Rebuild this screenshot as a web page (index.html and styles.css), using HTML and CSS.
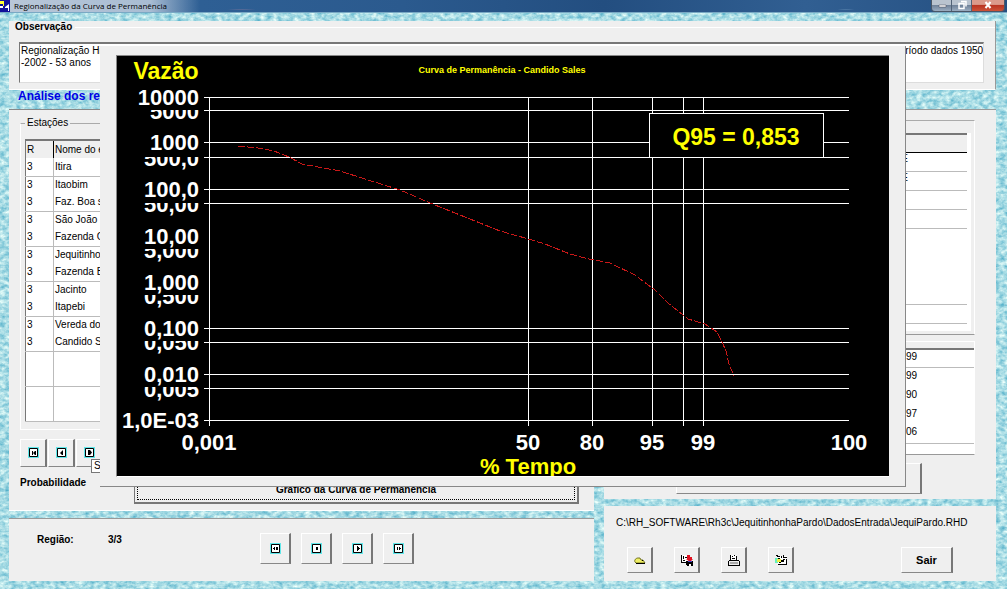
FILE: index.html
```html
<!DOCTYPE html>
<html lang="pt-BR">
<head>
<meta charset="utf-8">
<title>Regionalização da Curva de Permanência</title>
<link rel="stylesheet" href="styles.css">
</head>
<body>
<svg class="water" aria-hidden="true">
  <filter id="ripple" x="0" y="0" width="100%" height="100%" color-interpolation-filters="sRGB">
    <feTurbulence type="fractalNoise" baseFrequency="0.18 0.26" numOctaves="3" seed="8"/>
    <feColorMatrix values="0.75 0 0 0 0.28  0.4 0 0 0 0.66  0.25 0 0 0 0.77  0 0 0 0 1"/>
  </filter>
  <rect width="100%" height="100%" filter="url(#ripple)"/>
</svg>
<div class="window">
  <header class="titlebar">
    <svg class="app-icon" viewBox="0 0 10 12"><path fill="#10109a" d="M0 0h10v12H0z"/><path fill="#ff3" d="M0 1h4v5H3V4H0z"/><path fill="#fff" d="M5 7l4-3v7H8V8H5zM0 6h3v2H0z"/></svg>
    <h1 class="title">Regionalização da Curva de Permanência</h1>
    <div class="caption-buttons">
      <button class="cap" aria-label="Minimizar"><svg viewBox="0 0 20 11"><path fill="#fff" stroke="#445" stroke-width=".5" d="M7 5h7v2H7z"/></svg></button>
      <button class="cap" aria-label="Restaurar"><svg viewBox="0 0 20 11"><path fill="none" stroke="#fff" stroke-width="1.5" d="M9 1.500h5v5M7 3.500h5v5H7z"/></svg></button>
      <button class="cap close" aria-label="Fechar"><svg viewBox="0 0 20 11"><path fill="none" stroke="#fff" stroke-width="2" d="M7.500 2l5 6M12.500 2l-5 6"/></svg></button>
    </div>
  </header>

  <main class="content">
    <section class="panel observation">
      <label class="obs-label" for="obs">Observação</label>
      <textarea id="obs" class="obs-text" wrap="off">Regionalização Hid&#9;Período dados 1950
-2002 - 53 anos</textarea>
    </section>
    <h2 class="heading">Análise dos re</h2>

    <div class="columns">
      <div class="column">
        <section class="panel stations">
          <fieldset class="group">
            <legend>Estações</legend>
            <table class="station-table">
              <thead><tr><th>R</th><th>Nome do e</th></tr></thead>
              <tbody>
                <tr><td>3</td><td>Itira</td></tr>
                <tr><td>3</td><td>Itaobim</td></tr>
                <tr><td>3</td><td>Faz. Boa s</td></tr>
                <tr><td>3</td><td>São João (</td></tr>
                <tr><td>3</td><td>Fazenda C</td></tr>
                <tr><td>3</td><td>Jequitinhor</td></tr>
                <tr><td>3</td><td>Fazenda B</td></tr>
                <tr><td>3</td><td>Jacinto</td></tr>
                <tr><td>3</td><td>Itapebi</td></tr>
                <tr><td>3</td><td>Vereda do</td></tr>
                <tr><td>3</td><td>Candido S</td></tr>
                <tr><td></td><td></td></tr>
                <tr><td></td><td></td></tr>
                <tr><td></td><td></td></tr>
                <tr><td></td><td></td></tr>
              </tbody>
            </table>
          </fieldset>
          <div class="station-nav">
            <button class="btn nav-small" aria-label="Primeira estação"><svg class="nav-icon" viewBox="0 0 11 11"><path class="halo" d="M0 0h11v11H0z"/><path class="frame" d="M1.500 1.500h8v8h-8z"/><path d="M4 4h1v4H4zM5 6l2-2v4zM7 4h1v4H7z"/></svg></button>
            <button class="btn nav-small" aria-label="Estação anterior"><svg class="nav-icon" viewBox="0 0 11 11"><path class="halo" d="M0 0h11v11H0z"/><path class="frame" d="M1.500 1.500h8v8h-8z"/><path d="M4 6l3-3v5H6z"/></svg></button>
            <button class="btn nav-small" aria-label="Próxima estação"><svg class="nav-icon" viewBox="0 0 11 11"><path class="halo" d="M0 0h11v11H0z"/><path class="frame" d="M1.500 1.500h8v8h-8z"/><path d="M4 3h2l2 2.500L6 8H4z"/></svg><span class="tip">S</span></button>
          </div>
          <div class="probability">
            <span class="strong">Probabilidade</span>
            <button class="btn curve-button"><span class="focus">Gráfico da Curva de Permanência</span></button>
          </div>
        </section>
        <section class="panel region">
          <span class="strong region-name">Região:</span>
          <output class="strong region-count">3/3</output>
          <div class="region-nav">
            <button class="btn nav-large" aria-label="Primeira região"><svg class="nav-icon" viewBox="0 0 11 11"><path class="halo" d="M0 0h11v11H0z"/><path class="frame" d="M1.500 1.500h8v8h-8z"/><path d="M3 5h1V4h1v3H4V6H3zM6 4h2v3H6z"/></svg></button>
            <button class="btn nav-large" aria-label="Região anterior"><svg class="nav-icon" viewBox="0 0 11 11"><path class="halo" d="M0 0h11v11H0z"/><path class="frame" d="M1.500 1.500h8v8h-8z"/><path d="M5 4h2v3H5z"/></svg></button>
            <button class="btn nav-large" aria-label="Próxima região"><svg class="nav-icon" viewBox="0 0 11 11"><path class="halo" d="M0 0h11v11H0z"/><path class="frame" d="M1.500 1.500h8v8h-8z"/><path d="M5 3h1v1h1v1h1v1H7v1H6v1H5z"/></svg></button>
            <button class="btn nav-large" aria-label="Última região"><svg class="nav-icon" viewBox="0 0 11 11"><path class="halo" d="M0 0h11v11H0z"/><path class="frame" d="M1.500 1.500h8v8h-8z"/><path d="M4 4h1v3H4zM6 4h1v1h1v1H7v1H6z"/></svg></button>
          </div>
        </section>
      </div>

      <div class="column">
        <section class="panel results">
          <div class="box types">
            <table class="type-table">
              <thead><tr><th></th></tr></thead>
              <tbody>
                <tr class="line"><td>E</td></tr>
                <tr class="line"><td>E</td></tr>
                <tr class="line"><td></td></tr>
                <tr class="line"><td></td></tr>
                <tr><td></td></tr>
                <tr><td></td></tr>
                <tr><td></td></tr>
                <tr class="line"><td></td></tr>
                <tr class="line"><td></td></tr>
              </tbody>
            </table>
          </div>
          <div class="box values">
            <table class="value-table">
              <tbody>
                <tr class="line"><td>99</td></tr>
                <tr><td>99</td></tr>
                <tr><td>90</td></tr>
                <tr><td>97</td></tr>
                <tr class="line"><td>06</td></tr>
              </tbody>
            </table>
          </div>
          <button class="btn wide-button" aria-label="Resultados"></button>
        </section>
        <section class="panel file">
          <p class="path">C:\RH_SOFTWARE\Rh3c\JequitinhonhaPardo\DadosEntrada\JequiPardo.RHD</p>
          <div class="tools">
            <button class="btn tool" aria-label="Abrir"><svg viewBox="0 0 14 14"><path fill="#ee6" stroke="#550" stroke-width=".8" d="M2 9c-1-2 1-4 3-4h2l1 2h2l2 3H3z"/><path d="M3 10h9v1H3zM9 7h1v1H9z"/></svg></button>
            <button class="btn tool" aria-label="Salvar"><svg viewBox="0 0 14 14"><path fill="#fff" d="M1 2h8v8H1z"/><path d="M1 2h1v8H1zM1 9h6v1H1zM3 3h1v3H3zM5 4h2v1H5zM3 7h2v1H3z"/><path fill="#e01020" d="M7 2h3v2h2v2h1L10 9 6 6h1z"/><path d="M6 8h2v1h4V8h1v5H7v-1H6z"/><path fill="#44c" d="M8 8h4v1H8z"/><path fill="#fff" d="M9 11h2v2H9z"/></svg></button>
            <button class="btn tool" aria-label="Imprimir"><svg viewBox="0 0 14 14"><path fill="#fff" d="M3 2h6l2 5H3z"/><path d="M3 2h1v5H3zM5 3h1v1H5zM7 2h1v1H7zM9 3h1v4H9zM5 5h3v1H5zM2 7h10v1H2zM1 8h1v4h10V8h1v5H1z"/><path fill="#aaa" d="M3 9h8v2H3z"/></svg></button>
            <button class="btn tool" aria-label="Configurar"><svg viewBox="0 0 14 14"><path fill="#fff" d="M3 3h10v8H3z"/><path fill="#6eb" d="M1 5h3v5H1z"/><path fill="#ee4" d="M3 6h4v3H3z"/><path d="M2 2h2v1h2v1H3V3H2zM7 3h1v2H7zM9 2h1v2h3v1H9zM12 6h1v6H4v-1h8zM7 7h2V6h2v1h-1v2H7zM4 5h2v1H4zM5 9h2v1H5z"/></svg></button>
            <button class="btn exit">Sair</button>
          </div>
        </section>
      </div>
    </div>
  </main>

  <div class="dialog" role="dialog" aria-label="Curva de Permanência">
    <svg class="chart" viewBox="117 56 772 420" role="img" aria-label="Curva de Permanência - Candido Sales">
      <g class="grid">
        <path d="M204 97.500H849M204 110.500H849M204 142.500H849M204 157.500H849M204 189.500H849M204 203.500H849M204 328.500H849M204 342.500H849M204 374.500H849M204 388.500H849M204 420.500H849"/>
        <path d="M209.500 97V426M528.500 97V426M592.500 97V426M652.500 97V426M683.500 97V426M703.500 97V426"/>
      </g>
      <path class="curve" d="M238 146l20 2 16 3 15 6 13 7 38 7 25 8 35 11 35 15 35 14 30 12 25 7 20 6 25 10 19 5 21 4 25 12 20 15 13 13 20 16 17 5 12 8 5 10 4 9 3 13 5 12"/>
      <g class="label end">
        <text x="199" y="119">5000</text><text x="199" y="166">500,0</text><text x="199" y="212">50,00</text><text x="199" y="258">5,000</text><text x="199" y="304">0,500</text><text x="199" y="350">0,050</text><text x="199" y="397">0,005</text>
      </g>
      <path d="M118 86h82v24h-82zM118 132h82v25h-82zM118 179h82v24h-82zM118 225h82v24h-82zM118 271h82v24h-82zM118 317h82v24h-82zM118 363h82v24h-82z"/>
      <g class="label end">
        <text x="199" y="105">10000</text><text x="199" y="150">1000</text><text x="199" y="197">100,0</text><text x="199" y="244">10,00</text><text x="199" y="290">1,000</text><text x="199" y="336">0,100</text><text x="199" y="382">0,010</text><text x="199" y="428">1,0E-03</text>
      </g>
      <g class="label middle">
        <text x="209" y="450">0,001</text><text x="528" y="450">50</text><text x="592" y="450">80</text><text x="652" y="450">95</text><text x="703" y="450">99</text><text x="849" y="450">100</text>
      </g>
      <rect class="callout" x="649.5" y="113.5" width="174" height="44"/>
      <g class="label middle yellow">
        <text class="large" x="166" y="79">Vazão</text><text x="528" y="474">% Tempo</text><text class="large" x="736" y="145">Q95 = 0,853</text><text class="chart-title" x="502" y="73">Curva de Permanência - Candido Sales</text>
      </g>
    </svg>
  </div>
</div>
</body>
</html>
```
FILE: styles.css
```css
* { box-sizing: border-box; }

body {
  margin: 0;
  background: #a9dfe6;
  color: #000;
  font: 10px/12px "Liberation Sans", Arial, sans-serif;
}

h1, h2, p { margin: 0; }

.water {
  position: absolute;
  inset: 0;
  width: 100%;
  height: 100%;
}

.window {
  position: relative;
  min-height: 100vh;
  display: flex;
  flex-direction: column;
}

.titlebar {
  display: flex;
  align-items: center;
  gap: 4px;
  height: 13px;
  border-bottom: 1px solid #79a9c4;
  background:
    linear-gradient(90deg, #b9c7d8 0, #a9bdd3 150px, transparent 200px),
    radial-gradient(ellipse at 24% 80%, #77739a 0, transparent 16px),
    radial-gradient(ellipse at 31% 90%, #70719a 0, transparent 16px),
    radial-gradient(ellipse at 43% 90%, #9cb9d5 0, transparent 14px),
    radial-gradient(ellipse at 57% 90%, #87aacb 0, transparent 16px),
    radial-gradient(ellipse at 84% 80%, #8db3d2 0, transparent 12px),
    linear-gradient(90deg, #31649a, #2b5a8e 40%, #234e80 60%, #315f92 80%, #244f81);
}

.app-icon { width: 10px; height: 12px; }

.title {
  flex: 1;
  font: 8px/12px "Open Sans", "Noto Sans", sans-serif;
}

.caption-buttons {
  display: flex;
  align-self: flex-start;
  margin-right: 2px;
  border: 1px solid #4a5666;
  border-top: 0;
  border-radius: 0 0 4px 4px;
  overflow: hidden;
}

.cap {
  width: 20px;
  height: 11px;
  padding: 0;
  border: 0;
  border-right: 1px solid #526277;
  background: linear-gradient(#b9c3cf 45%, #71839a 50%, #9aacc0);
}

.cap svg { display: block; width: 20px; height: 11px; }

.close {
  display: flex;
  justify-content: center;
  width: 32px;
  border-right: 0;
  background: linear-gradient(#db9a8b 40%, #b93522 50%, #cc5238);
}

.content {
  flex: 1;
  display: flex;
  flex-direction: column;
  padding: 8px 11px 8px 9px;
}

.panel { background: #efefef; }

.observation {
  display: flex;
  flex-direction: column;
  gap: 9px;
  padding: 0 11px 6px 10px;
  border-right: 1px solid #999;
  border-bottom: 1px solid #fff;
}

.obs-label, .strong { font-weight: bold; }

.obs-label {
  align-self: stretch;
  display: flex;
  gap: 3px;
  align-items: center;
  margin: 0 -11px 0 -4px;
}

.obs-label::after {
  content: "";
  flex: 1;
  height: 1px;
  background: #fff;
}

.obs-text {
  display: block;
  width: 100%;
  height: 41px;
  padding: 1px;
  border: 1px solid #ddd;
  border-top: 2px solid #777;
  border-left-color: #777;
  background: #fff;
  font: inherit;
  resize: none;
  overflow: hidden;
  white-space: pre;
  tab-size: 872px;
}

.heading {
  height: 19px;
  padding-left: 9px;
  color: #0000e6;
  font-size: 12px;
  line-height: 12px;
}

.columns {
  flex: 1;
  display: grid;
  grid-template-columns: 585fr 392fr;
  gap: 10px;
}

.column {
  display: flex;
  flex-direction: column;
  gap: 7px;
  min-width: 0;
}

.stations {
  padding: 7px 12px 6px 11px;
  border-top: 1px solid #888;
  border-bottom: 1px solid #fff;
}

.group {
  margin: 0;
  padding: 10px 4px 7px;
  border: 1px solid #fff;
  border-top-color: #aaa;
}

.group legend { padding: 0 2px; }

table { border-collapse: collapse; width: 100%; }

.station-table {
  table-layout: fixed;
  background: #fff;
  border: 1px solid #777;
  border-top-width: 2px;
}

th, td { padding: 0; text-align: left; font-weight: normal; }

.station-table th, .station-table td {
  height: 17px;
  padding-left: 1px;
  border-right: 1px solid #bbb;
  line-height: 12px;
}

.station-table th { height: 18px; background: #efefef; border-right-color: #000; }
.station-table th:first-child { width: 28px; }
.station-table tbody tr:nth-child(odd) td { height: 18px; border-bottom: 1px solid #bbb; }

.btn {
  padding: 0;
  border: 1px solid #fff;
  border-right: 2px solid #777;
  border-bottom: 1px solid #888;
  background: #efefef;
  color: #000;
  font: bold 10px/12px "Liberation Sans", Arial, sans-serif;
}

.station-nav {
  display: flex;
  gap: 1px;
  margin: 9px 0 10px;
}

.nav-small {
  position: relative;
  display: grid;
  place-items: center;
  width: 27px;
  height: 28px;
}

.nav-large {
  display: grid;
  place-items: center;
  width: 31px;
  height: 31px;
}

.nav-icon { display: block; width: 11px; height: 11px; }
.halo { fill: #61e7ea; }
.frame { fill: #fff; stroke: #000; }

.tip {
  position: absolute;
  left: 14px;
  top: 19px;
  width: 12px;
  height: 14px;
  border: 1px solid #777;
  background: #fff;
  font-weight: normal;
  text-align: left;
  padding-left: 2px;
}

.probability {
  display: flex;
  align-items: flex-start;
  justify-content: space-between;
}

.curve-button {
  width: 445px;
  height: 27px;
  margin-right: 3px;
  padding: 2px;
  border: 1px solid #777;
  border-right-width: 2px;
  border-bottom-width: 2px;
}

.focus {
  display: grid;
  place-items: center;
  height: 100%;
  border: 1px dotted #000;
}

.region {
  flex: 1;
  display: flex;
  align-items: flex-start;
  padding: 14px 28px;
  border-top: 1px solid #999;
}

.region .strong { margin-top: 1px; }
.region-name { width: 71px; }
.region-count { width: 152px; }
.region-nav { display: flex; gap: 10px; }

.results {
  padding: 10px 21px 5px 20px;
  border-top: 1px solid #999;
}

.box { border: 1px solid #fff; }

.types {
  padding: 12px 3px 3px;
  border-top-color: #aaa;
  border-bottom-color: #999;
}

.type-table, .value-table {
  border-top: 2px solid #777;
  background: #fff;
}

.type-table { border-right: 4px solid #fff; }
.type-table th { height: 18px; background: #efefef; border-right: 1px solid #999; border-bottom: 1px solid #000; }
.type-table td, .value-table td { height: 19px; text-align: right; }
.type-table td { padding: 0 59px 5px 0; }
.line td { border-bottom: 1px solid #bbb; }

.types::after, .values::after {
  content: "";
  display: block;
  height: 7px;
  background: #fff;
}

.values {
  margin-top: 6px;
  padding: 6px 0 0;
  border-bottom-color: #999;
}

.values::after { height: 10px; }
.value-table td { padding: 0 57px 3px 0; }

.wide-button {
  display: block;
  width: 246px;
  height: 31px;
  margin: 8px 0 0 52px;
}

.file {
  flex: 1;
  padding: 11px 0 8px 12px;
}

.path { white-space: nowrap; }

.tools {
  display: flex;
  gap: 21px;
  padding: 18px 43px 0 11px;
}

.tool {
  display: grid;
  place-items: center;
  width: 26px;
  height: 26px;
}

.tool svg { width: 14px; height: 14px; }

.exit {
  width: 52px;
  height: 26px;
  margin-left: auto;
  font-size: 11px;
}

.dialog {
  position: absolute;
  left: 100px;
  right: 101px;
  top: 46px;
  padding: 9px 16px;
  border-right: 1px solid #888;
  border-bottom: 1px solid #888;
  background: #efefef;
}

.chart {
  display: block;
  width: 100%;
  border-top: 1px solid #888;
  border-left: 1px solid #888;
  border-bottom: 1px solid #fff;
  background: #000;
}

.grid { fill: none; stroke: #fff; }
.curve { fill: none; stroke: #c81818; stroke-dasharray: 7 2; shape-rendering: crispEdges; }
.label { fill: #fff; font: bold 22px "Liberation Sans", Arial, sans-serif; }
.end { text-anchor: end; }
.middle { text-anchor: middle; }
.yellow { fill: #ff0; }
.callout { fill: #000; stroke: #fff; }
.large { font-size: 23px; }
.chart-title { font-size: 9px; }
```
